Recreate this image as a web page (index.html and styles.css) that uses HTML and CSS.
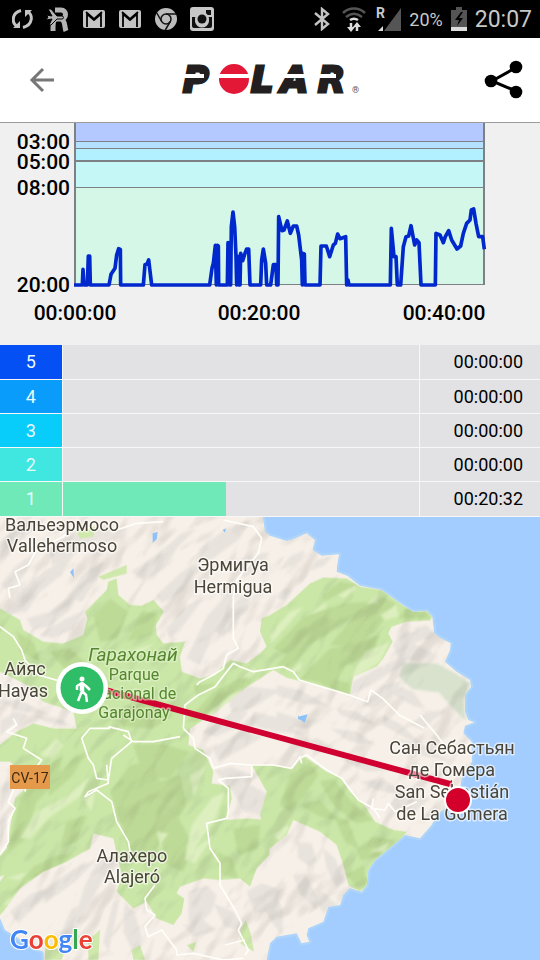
FILE: index.html
```html
<!DOCTYPE html>
<html lang="ru">
<head>
<meta charset="utf-8">
<meta name="viewport" content="width=device-width, initial-scale=1">
<title>Polar</title>
<link rel="stylesheet" href="styles.css">
</head>
<body>
<div class="status">
  <div class="status-group">
    <svg width="22" height="24" viewBox="0 0 22 24" fill="none" stroke="#c4c4c4" stroke-width="3"><path d="M9 3.500C-1 6-.5 17 6 19.500M11 20.500C21 18 21.500 7 15 4.500"/><path d="M1 21h7v-7zM20 3h-7v7z" fill="#c4c4c4" stroke="none"/></svg>
    <svg width="24" height="26" viewBox="0 0 24 26"><path fill="none" stroke="#b4b4b4" stroke-width="5" d="M9 4h6c6 0 6 9 0 9h-4c-4 0-4 4-4 12M15 13c5 2 3 7 5 12"/><path d="M0 9l6 1-4-7 3 0 6 7h5c2 0 2 3 0 3h-5l-6 6H3l3-6-6 1 2-3z" fill="#b4b4b4" stroke="#000" stroke-width="1"/></svg>
    <svg width="24" height="20" viewBox="0 0 24 20"><rect x="1" y="1" width="22" height="18" rx="2" fill="#c4c4c4"/><path d="M5 18V5l7 6 7-6v13M4 3l8 7 8-7" fill="none" stroke="#000" stroke-width="1.800"/></svg>
    <svg width="24" height="20" viewBox="0 0 24 20"><rect x="1" y="1" width="22" height="18" rx="2" fill="#c4c4c4"/><path d="M5 18V5l7 6 7-6v13M4 3l8 7 8-7" fill="none" stroke="#000" stroke-width="1.800"/></svg>
    <svg width="24" height="24" viewBox="0 0 24 24"><circle cx="12" cy="12" r="11" fill="#bcbcbc"/><g fill="none" stroke="#111" stroke-width="1.500"><circle cx="12" cy="12" r="5"/><path d="M12 7h10M7.700 14.500L2.800 6M16.300 14.500l-5 8.500"/></g></svg>
    <svg width="24" height="24" viewBox="0 0 24 24"><rect width="24" height="24" rx="3" fill="#c8c8c8"/><rect x="16" y="3" width="5" height="5" fill="#111"/><path d="M2 10h4a7 7 0 1 0 12 0h4v9q0 2-2 2H4q-2 0-2-2z" fill="#111"/><circle cx="12" cy="12" r="7" fill="#c8c8c8"/><circle cx="12" cy="12" r="4.500" fill="#111"/></svg>
  </div>
  <div class="status-group status-right">
    <svg width="20" height="24" viewBox="0 0 20 24" fill="none" stroke="#c4c4c4" stroke-width="2.400"><path d="M2 6l13 11-6 5V2l6 5L2 18"/></svg>
    <svg width="26" height="26" viewBox="0 0 26 26" fill="none" stroke-width="2.500"><path d="M2 7c6-6 16-6 22 0M5 11c5-4 11-4 16 0" stroke="#555"/><path d="M9 14c3-2 5-2 8 0" stroke="#ddd"/><path d="M10 17v7M16 25v-7" stroke="#ddd"/><path d="M6 21h8l-4 5zM12 21h8l-4-5z" fill="#ddd"/></svg>
    <svg width="26" height="28" viewBox="0 0 26 28"><text x="1" y="13" class="roam">R</text><path d="M26 3v23H9z" fill="#555"/><path d="M8 21v5H3z" fill="#ddd"/></svg>
    <span class="percent">20%</span>
    <svg width="16" height="24" viewBox="0 0 16 24"><path d="M5 0h6v3h5v21H0V3h5z" fill="#555"/><path d="M0 20h16v4H0z" fill="#ddd"/><path d="M10 5l-6 8h4l-2 6 6-8H8l4-6z" fill="#000"/></svg>
    <time class="clock">20:07</time>
  </div>
</div>
<header class="bar">
  <button class="icon-button back" aria-label="Back"><svg width="26" height="26" viewBox="0 0 26 26" fill="none" stroke="#777" stroke-width="3"><path d="M25 13H3M14 2L3 13l11 11"/></svg></button>
  <svg class="logo" width="180" height="40" viewBox="180 60 180 40" role="img" aria-label="Polar">
    <g class="wordmark"><text x="183" y="92">P</text><text x="251" y="92">L</text><text x="281" y="92">A</text><text x="318" y="92">R</text></g>
    <circle cx="234" cy="79" r="15" fill="#e31837"/>
    <path d="M182 74h22v4h-22zM218 74h32v4h-32zM284 74h30v4h-30zM316 74h20v4h-20z" fill="#fff"/>
    <text x="352" y="93" class="reg">®</text>
  </svg>
  <button class="icon-button share" aria-label="Share"><svg width="40" height="40" viewBox="482 60 40 40"><path d="M515 67l-25 14 25 10.500" fill="none" stroke="#000" stroke-width="3"/><circle cx="489" cy="81" r="6.300"/><circle cx="514" cy="67" r="6.300"/><circle cx="514" cy="92" r="6.300"/></svg></button>
</header>
<main>
<svg class="chart" viewBox="0 123 540 222" role="img" aria-label="Pace">
  <path fill="#b3c9ff" d="M75 123h409v18H75z"/><path fill="#b3e1ff" d="M75 141h409v8H75z"/><path fill="#b3f0ff" d="M75 149h409v12H75z"/><path fill="#c6f7f7" d="M75 161h409v27H75z"/><path fill="#d4f7e8" d="M75 188h409v97H75z"/>
  <path d="M75 141.500h409M75 148.500h409M75 187.500h409M75 284.500h409" stroke="#7d8185"/>
  <path d="M75 161h409M75 123v162M484 123v162" stroke="#7d8185" stroke-width="2"/>
  <svg x="0" y="120" width="540" height="210" viewBox="0 0 1620 630"><path fill="none" stroke="#0028cd" stroke-width="11" stroke-linejoin="round" d="M222 495H247L249 448 252 495H262L265 408H269L271 495H327L333 463 345 445 350 405 356 386 361 388 362 495H430L435 434 441 432 446 420 455 495H629L636 445 640 430 646 376 649 495 652 376 655 378 656 495H682L684 368 688 370 689 495H692L694 320 699 276 704 320 708 408 710 495 712 408 716 495H720L722 400 728 422 735 400 740 387 746 387 750 495H782L785 420 790 387 797 430 800 495H812L820 434H828L830 495H834L836 290 846 332 852 330 862 303 871 340 880 318H890L896 345 905 420 907 495 908 400 913 402 915 495H960L963 378H979L989 410 1000 375 1006 370 1013 342 1020 356 1037 350 1040 495 1044 480 1047 495H1171L1174 325 1182 410H1188L1192 495H1202L1210 380 1218 350 1226 348 1233 317 1244 375 1250 360 1257 368 1263 495H1306L1308 340 1320 345 1330 368 1336 350 1346 332 1355 360 1371 387 1382 378 1390 340 1400 310 1410 300 1414 270 1421 267 1428 310 1436 350 1448 350 1453 388"/></svg>
  <g class="axis"><g text-anchor="end"><text x="70" y="149">03:00</text><text x="70" y="169">05:00</text><text x="70" y="195">08:00</text><text x="70" y="292">20:00</text></g><g text-anchor="middle"><text x="75" y="320">00:00:00</text><text x="259" y="320">00:20:00</text><text x="444" y="320">00:40:00</text></g></g>
</svg>
<table class="zones">
  <tbody>
  <tr><th scope="row" class="z5">5</th><td></td><td class="dur">00:00:00</td></tr>
  <tr><th scope="row" class="z4">4</th><td></td><td class="dur">00:00:00</td></tr>
  <tr><th scope="row" class="z3">3</th><td></td><td class="dur">00:00:00</td></tr>
  <tr><th scope="row" class="z2">2</th><td></td><td class="dur">00:00:00</td></tr>
  <tr><th scope="row" class="z1">1</th><td><div class="fill" style="width:46%"></div></td><td class="dur">00:20:32</td></tr>
  </tbody>
</table>
<svg class="map" viewBox="0 517 540 443" role="img" aria-label="La Gomera">
  <defs>
    <clipPath id="land"><path id="coast" d="M0 0H788L795 50 810 62 860 78 880 72 920 55 945 75 938 105 965 122 1017 118 1012 150 1010 170 1042 182 1080 212 1145 225 1200 265 1240 290 1280 288 1297 305 1303 355 1320 368 1352 385 1350 405 1335 440 1370 470 1410 495 1413 515 1395 540 1395 590 1405 615 1423 622 1395 632 1390 655 1415 680 1416 740 1385 790 1375 850 1310 900 1295 930 1260 970 1215 960 1180 990 1125 1035 1105 1065 1100 1110 1085 1130 1050 1120 1030 1140 1020 1170 985 1175 970 1220 925 1240 920 1260 928 1280 905 1285 890 1255 830 1265 810 1285 800 1335H132L130 1310 100 1300 40 1260 15 1245 0 1210z"/></clipPath>
    <clipPath id="woods"><path id="forest" d="M0 280L60 315 70 345 130 380 190 385 250 360 262 310 255 290 280 265 320 225 325 200 350 190 355 240 390 270 425 272 460 255 492 290 468 330 470 360 490 385 555 380 540 425 545 470 600 490 640 480 690 435 740 445 780 415 800 395 780 350 785 310 810 300 860 270 930 205 970 187 1040 190 1080 215 1145 225 1200 265 1240 290 1280 288 1297 305 1290 316 1220 320 1175 335 1165 355 1178 380 1150 430 1130 455 1060 485 1050 540 990 520 860 488 820 465 780 490 720 530 650 590 570 640 565 690 610 705 640 770 635 805 690 812 695 850 680 915 740 910 810 915 808 1020 770 1060 750 1115 720 1090 660 1095 610 1090 540 1115 530 1135 553 1150 545 1195 520 1230 470 1210 440 1160 400 1180 350 1130 365 1080 340 970 280 955 270 1000 200 1040 130 1070 60 1120 10 1190 0 1200V1100L40 1040 100 1000 120 940 100 930 105 915 150 910 195 920 190 980 155 1035 110 1045 0 1085V1020L20 1000 45 850 75 820 70 780 30 740 0 740V690L50 650 100 625 160 640 230 640 220 590 130 560 80 510 0 470zM755 750H800L880 758 910 722 980 770 1020 785 1050 830 1090 865 1125 920 1180 945 1220 950 1190 990 1130 1035 1105 1065 1100 1115 1080 1130 1045 1110 1030 1050 1010 990 960 950 880 915 860 960 810 1000 780 900 800 830z"/></clipPath>
    <filter id="soft"><feGaussianBlur stdDeviation="3"/></filter>
    <filter id="relief" x="0" y="0" width="1" height="1" color-interpolation-filters="sRGB"><feTurbulence type="fractalNoise" baseFrequency=".009 .005" numOctaves="3" seed="7"/><feColorMatrix values="0 0 0 0 0  0 0 0 0 0  0 0 0 0 0  1 0 0 0 0"/><feDiffuseLighting surfaceScale="60" diffuseConstant="1.300" lighting-color="#fff"><feDistantLight azimuth="200" elevation="50"/></feDiffuseLighting></filter>
  </defs>
  <rect y="517" width="540" height="443" fill="#a3cdff"/>
  <svg x="0" y="515" width="540" height="445" viewBox="0 0 1620 1335">
    <use href="#coast" fill="#f3ece2" stroke="#add4fb" stroke-width="14" stroke-linejoin="round"/>
    <use href="#coast" fill="#f6efe6"/>
    <g clip-path="url(#land)">
      <g fill="#dedad5" opacity=".6" filter="url(#soft)">
        <path d="M0 80l60-55 80-15-70 60-70 80zM150 100l70-45 80-15 40-25-10 45-75 30-60 50-40 10zM50 240l80-70 90-50-35 60-65 50-40 60-70 10zM205 250l40-70 65-40-20 55-45 65zM395 170l80-55 70-60 45-15-60 60-35 60-65 35zM470 240l70-65 45-30 20 15-60 70-60 35zM600 100l80-60 70-25-30 55-80 60-55 15zM560 430l60-125 85-95-15 80-60 85-30 75zM640 345l55-70 70-80-25 90-70 80zM500 340l60-70 50-20-55 75-45 50zM80 310l75-20 90-65-35 60-65 50-45 10zM120 360l70-45 65-30-35 55-60 30zM0 210l50-60 60-40-30 60-50 60z"/>
        <path d="M835 165l35-40 45-20-15 35-45 20zM930 165l20-30 50-15-25 30-35 15zM830 250l20-30 25 5-20 30zM710 160l55-40 45-10-30 50-50 30z"/>
        <path d="M1180 390l30-35 50-10 35 20-55 20 60 30-40 25-65-10zM1240 340l40-10 25 30-25 15zM1155 450l50-30 25-5-15 35-60 30zM1060 500l80-45 40 10-60 40-75 40zM1090 570l50-55 70-20-40 50-55 35zM1180 510l60 20 35 50-30-5-65-35zM1230 630l50-40 60-5-40 30-30 30zM1010 580l60 10 60 40-50-10-60-20zM830 510l70 15 90 50-80-10-80-25zM830 590l80 25 60-5-45 30-95-10zM990 640l80 10 60 40-80-10zM1150 600l55 30 75 70-70-35-60-35z"/>
        <path d="M680 540l70-25 90 10-60 40-80 40zM610 650l75-50 60-10-40 50-60 25zM760 590l80 20 70 50-80-10-80-20zM640 700l80-50 70 15-60 35-75 40zM880 680l75-10 70 45-80-5zM1020 730l80 5 80 30-80 5zM1080 800l70-10 60 50-80-15zM645 765l50-10 60 30-15 80-45-40zM700 830l55-20 50 30-15 60-60-10zM1170 870l30-40 90 20-50 45zM1190 670l80 20 80 50-90-20z"/>
        <path d="M150 935l35-5-10 70-25 30-5-50zM255 1110l40-75 60-10-35 50-45 80-40 70-15-5zM130 1130l85-65 80-35-70 70-90 65zM30 1190l65-55 70-20-65 60-45 50zM375 1160l30 35 20 70-20 60-35-75zM310 1280l30-120 20-10-15 70-20 90zM565 1130l55-20 30 30-15 50-50 50-20-20zM640 1165l60 25 35 60-60-15zM550 1230l60-15 40 30-70 20zM740 1130l45-25 60 20-30 60-50 10zM890 980l45 5 15 50-20 20-35-25zM970 1000l35 30 30 70-25 20-30-60zM880 1080l35-5 40 80-5 30-50-50zM940 1145l30-15 40 40-40 25zM790 1180l30-60 30 70-5 70-30-40zM180 1260l35-80 20-5-20 100z"/>
        <path d="M0 620l45-30 40 10-50 30-35 35zM100 600l80 10 35 25-80-15zM0 820l40-50 20 20-40 65-20 40zM0 920l20-20 0 30-20 50zM0 560l60-5 90 45-90-10z"/>
      </g>
      <path fill="#ceddc5" opacity=".75" d="M1210 445l100 0 60 32 40 30-18 50 5 60-35-35-45-50-80-10-40-35z" filter="url(#soft)"/>
      <use href="#forest" fill="#cbe7a8"/>
      <path fill="#cfe8ac" d="M295 185l85-35 0 25-70 20zM230 50l55-15-5 30-40 5zM265 1275l35-30-5 90h-30zM395 1305l25-15 15 45h-35zM722 1245l15-30 15 40 10 55-40-25zM135 1295l60 10-10 30h-50zM560 1290l30-10-10 30z"/>
      <g clip-path="url(#woods)"><g filter="url(#soft)">
        <g fill="#b7d590" opacity=".65"><path d="M330 830l60-80 70-10 20 60 60-20 20 90-50 80-70 80-50-20-30-90zM400 690l80-5 90 25-60 80-80-5zM480 960l50-60 50 90-30 80-50-20zM20 1020l40-170 60-80 70-50-20 80-60 60-35 110zM30 1140l70-85 60-30 60-10-60 60-80 20-50 80zM150 800l80-80 30-10-45 75-70 60zM180 1000l20-80 60-20-30 80z"/><path d="M280 300l50-50 55 40-35 80-50 10zM380 380l45-90 50 5-20 65zM340 590l90-30 90 40-60 40-90-5zM150 410l60-10 65 60-70 15zM50 350l50 30 20 60-60-30zM560 620l80-90 90-45 25 10-85 70-80 55zM580 510l70-5-60 40z"/><path d="M970 240l50-40 60 10-50 20-60 30zM820 400l90-95 120-40 80-5-60 50-90 60-90 50zM990 390l90-110 70-35 35 20-55 80-70 50zM900 490l90-90 60-10 90-30-20 50-80 40-40 60zM830 450l60-70 30 20-45 60zM1195 310l20-30 65 10 10 20zM960 505l30-15 60 15v40z"/><path d="M870 780l60-40 25 40-40 60-45 50-30-20zM960 800l40-10 60 75 60 50-50 10-70-55zM1000 900l45 20 30 80-40-20zM1070 1000l50-35 60 10-40 50-60 10zM900 870l60-15 50 60-50-10zM1040 1080l50-30 10 60-25 10zM700 940l80-10-5 70-60 20zM650 1010l45 20 20 60-50-10z"/></g>
        <g fill="#e2f2c5" opacity=".8"><path d="M60 970l50-80 90-45 70-60-30 60-90 60-60 65zM10 1170l60-60 90-30 100-60-20 50-100 40-60 60zM560 1000l15-70 60-80 40-20-30 80-60 90 60-45-60 90-30-10zM570 780l45-25-35 90zM410 400l55-15-50 35zM470 950l35 5-25 35zM120 720l50-50 20 20-35 40zM0 780l60-35 20 20-50 60zM20 1090l60-20-20 25z"/><path d="M810 360l60-70 40-15-60 70-35 40zM1140 300l50-30 5 35-40 10zM1050 490l45-80 75-30-30 60-60 40zM1015 240l50-30 5 10-40 30zM1105 265l30-30-5 30zM930 300l50-40-5 20zM870 470l35-30-5 30zM820 960l40-30 10 10-30 40zM1110 1010l60-30-20 30z"/><path d="M620 600l70-60 40-20-60 60-50 45zM720 495l40-40 10 20zM250 850l35-20-10 60z"/></g>
      </g></g>
      <g transform="rotate(35 700 650)" class="shade"><rect x="-300" y="-400" width="2000" height="2100" filter="url(#relief)"/></g>
      <g fill="#8cc1fa"><path d="M458 55l15-4-3 22-12 10zM210 172l10-12 2 28zM895 605l28-7-9 25-15-10zM895 600l7 15-8-3zM668 45l10-5-3 13z"/></g>
      <g fill="none" stroke="#fffef9" stroke-width="5" stroke-linejoin="round">
        <path d="M0 335l40 30 25 40 10 30 40 45 70 20M30 250l-5-30 35-10-15-40 40-20 25-45 80-40 40-35M350 45l60-20 80-5M700 375v-130l10-50 65-80 10-45-25-35-90-20M700 370l15 30-35 20-10 40-30 20-40 20-10 10M550 640l5-70 40-30 50-25 55-70 20 10 40 15 60-10 30-5 30 15 18 25 150 45 55 20 10-35 35 25 50 50 75 40"/>
        <path d="M330 640l-60 0-25 30 20 60 15 20 10 40 35 5 10-65 60-50-10-30-60-15M40 610l10 20-30 20 60 20-10 30 55 35-15 20-30 15-5 60M540 665l-80 15-60 0-30-20M550 640l30 30 5 30 45 30 10 30 50-15 60 5h70l55 10 25-35 5 20M755 750v35l-80 5-20 5 30 25v70l-5 20-60 15 10 75 30 45v65l45 75 20 40-10 20 30 60-10 15M320 750l5 55-60 25-10 15 35-20 45 35 15 60 35 60 10 55M465 1110l-30 40 5 35 25 15-30 35 10 30 40-20 45 60 0 15 50-5 90 20 60-5M675 1290l60-15M900 730l20-10 60 45 45 25 50 65 45 25 20 30M1120 850l-5 30 40 5 10-20 20 25 65-30M1260 600l50 60 30 40 90 20"/>
        <path d="M60 780l-35 80 20 20-20 40 0 60-25 40"/>
      </g>
    </g>
  </svg>
  <path d="M105 690L450 784" stroke="#d00030" stroke-width="6"/><path d="M452 780v8l-5-5z" fill="#d00030"/>
  <g class="labels"><text x="62" y="531">Вальеэрмосо</text><text x="62" y="552">Vallehermoso</text><text x="233" y="571">Эрмигуа</text><text x="233" y="593">Hermigua</text><text x="25" y="675">Айяс</text><text x="23" y="697">Hayas</text><text x="132" y="862">Алахеро</text><text x="132" y="883">Alajeró</text><text x="452" y="754">Сан Себастьян</text><text x="452" y="776">де Гомера</text><text x="452" y="798">San Sebastián</text><text x="452" y="820">de La Gomera</text></g>
  <g class="labels park"><text x="133" y="661" class="park-name">Гарахонай</text><text x="134" y="680">Parque</text><text x="134" y="699">Nacional de</text><text x="134" y="718">Garajonay</text></g>
  <rect x="10" y="765" width="40" height="24" fill="#e59a4b"/><text x="30" y="783" class="road">CV-17</text>
  <circle cx="82" cy="688" r="26" fill="#fff"/><circle cx="82" cy="688" r="21.500" fill="#2fbd68"/>
  <g fill="none" stroke="#fff" stroke-width="2.500" stroke-linejoin="round"><path d="M82 682v9l-4 10M82 691l4 4 1 7M77 690v-4l5-3 4 3 4 4"/><path d="M82 683v8" stroke-width="4.500"/></g><circle cx="82" cy="679" r="2.500" fill="#fff"/>
  <circle cx="458" cy="800" r="14" fill="#fff"/><circle cx="458" cy="800" r="12" fill="#d4002c"/>
  <text x="10" y="949" class="google"><tspan fill="#4285f4">G</tspan><tspan fill="#ea4335">o</tspan><tspan fill="#fbbc05">o</tspan><tspan fill="#4285f4">g</tspan><tspan fill="#34a853">l</tspan><tspan fill="#ea4335">e</tspan></text>
</svg>
</main>
</body>
</html>
```
FILE: styles.css
```css
* { box-sizing: border-box; }
body { margin: 0; background: #f0f0f0; font-family: Roboto, "Noto Sans", sans-serif; color: #000; }
.status { display: flex; justify-content: space-between; align-items: center; height: 38px; padding: 0 8px 0 12px; background: #000; color: #c8c8c8; }
.status-group { display: flex; align-items: center; gap: 12px; }
.status-right { gap: 8px; }
.roam { font-size: 14px; font-weight: 700; fill: #c8c8c8; }
.percent { font-size: 18px; }
.clock { font-size: 23px; }
.bar { display: grid; grid-template-columns: 1fr auto 1fr; align-items: center; height: 85px; padding: 0 16px; background: #fff; border-bottom: 1px solid #9c9c9c; }
.icon-button { display: flex; padding: 0; border: 0; background: none; }
.back { justify-self: start; padding-left: 13px; }
.share { justify-self: end; }
.wordmark { font-family: "DejaVu Sans", sans-serif; font-size: 35px; font-weight: 700; font-style: oblique; fill: #231f20; stroke: #231f20; stroke-width: 3px; }
.reg { font-size: 9px; fill: #555; }
.chart, .map { display: block; width: 100%; height: auto; }
.axis { font-size: 21px; font-weight: 500; }
.zones { width: 100%; height: 172px; border-collapse: collapse; table-layout: fixed; background: #e2e2e4; font-size: 18px; }
.zones th, .zones td { height: 34px; padding: 0; border-bottom: 1px solid #f8f8f8; }
.zones th { width: 62px; border-right: 1px solid #f8f8f8; color: #e8fbff; font-weight: 400; text-align: center; }
.zones .dur { width: 121px; padding-right: 17px; border-left: 1px solid #f8f8f8; text-align: right; }
.z5 { background: #0450f5; }
.z4 { background: #0a9cfa; }
.z3 { background: #08cdfa; }
.z2 { background: #40e7e0; }
.z1, .fill { background: #6ee9b7; }
.fill { height: 34px; }
.shade { mix-blend-mode: multiply; opacity: 0.08; }
.labels { font-size: 18px; text-anchor: middle; fill: #4a4538; stroke: #fff; stroke-opacity: 0.6; stroke-width: 3px; stroke-linejoin: round; paint-order: stroke; }
.park { font-size: 16px; fill: #55862f; stroke: #e3f3cd; }
.park-name { font-size: 19px; font-style: italic; }
.road { font-size: 14px; text-anchor: middle; fill: #3d2b12; }
.google { font-family: Lato, sans-serif; font-size: 26px; font-weight: 700; stroke: #fff; stroke-width: 2px; paint-order: stroke; }
```
